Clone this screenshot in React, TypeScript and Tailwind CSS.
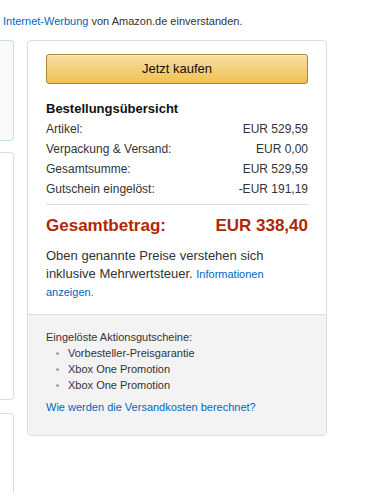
import React from "react";

// Zeilen der Bestellübersicht
const rows: { label: string; value: string }[] = [
  { label: "Artikel:", value: "EUR 529,59" },
  { label: "Verpackung & Versand:", value: "EUR 0,00" },
  { label: "Gesamtsumme:", value: "EUR 529,59" },
  { label: "Gutschein eingelöst:", value: "-EUR 191,19" },
];

const promotions = ["Vorbesteller-Preisgarantie", "Xbox One Promotion", "Xbox One Promotion"];

const App = () => {
  return (
    <div className="w-[375px] h-[493px] overflow-hidden bg-white text-[#333] font-['Liberation_Sans',Arial,sans-serif]">
      {/* Hinweiszeile oben */}
      <div className="h-[40px] pt-[14px] pl-[3px] text-[11px] leading-[14px]">
        <a className="text-[#0066c0]">Internet-Werbung</a> von Amazon.de einverstanden.
      </div>

      <div className="flex items-start gap-[13px]">
        {/* angeschnittene Spalte links */}
        <div className="w-[14px] flex flex-col">
          <div className="h-[101px] bg-[#fafafa] border border-l-0 border-[#c9dfe6] rounded-r-[4px]" />
          <div className="h-[248px] mt-[11px] bg-white border border-l-0 border-[#ddd] rounded-r-[4px]" />
          <div className="h-[100px] mt-[13px] bg-white border border-l-0 border-[#ddd] rounded-r-[4px]" />
        </div>

        {/* Kaufbox */}
        <div className="w-[300px] border border-[#ddd] rounded-[4px] overflow-hidden">
          <div className="px-[18px] pt-[13px] pb-[13px]">
            <button className="w-full h-[30px] rounded-[3px] border border-[#a88734] bg-gradient-to-b from-[#f7dfa5] to-[#f0c14b] text-[13px] text-[#111] shadow-[inset_0_1px_0_rgba(255,255,255,0.4)]">
              Jetzt kaufen
            </button>

            <div className="mt-[15px] text-[13px] leading-[20px] font-bold text-[#111]">
              Bestellungsübersicht
            </div>
            <div>
              {rows.map((row) => (
                <div key={row.label} className="flex justify-between text-[12px] leading-[20px]">
                  <span>{row.label}</span>
                  <span>{row.value}</span>
                </div>
              ))}
            </div>

            <div className="mt-[5px] border-t border-[#ddd]" />

            <div className="mt-[9px] flex justify-between text-[17px] leading-[24px] font-bold text-[#b12704]">
              <span>Gesamtbetrag:</span>
              <span>EUR 338,40</span>
            </div>

            <p className="mt-[9px] text-[13px] leading-[18px] text-[#333]">
              Oben genannte Preise verstehen sich
              <br />
              inklusive Mehrwertsteuer.{" "}
              <a className="text-[11px] text-[#0066c0]">
                Informationen
                <br />
                anzeigen.
              </a>
            </p>
          </div>

          {/* Aktionsgutscheine */}
          <div className="bg-[#f3f3f3] border-t border-[#ddd] px-[18px] pt-[14px] pb-[20px] text-[11px] leading-[16px]">
            <div className="text-[#333]">Eingelöste Aktionsgutscheine:</div>
            <ul>
              {promotions.map((p, i) => (
                <li key={i} className="flex items-center">
                  <span className="ml-[10px] mr-[9px] w-[3px] h-[3px] rounded-full bg-[#aaa]" />
                  <span className="text-[#333]">{p}</span>
                </li>
              ))}
            </ul>
            <a className="block mt-[6px] text-[#0066c0]">Wie werden die Versandkosten berechnet?</a>
          </div>
        </div>
      </div>
    </div>
  );
};

export default App;
